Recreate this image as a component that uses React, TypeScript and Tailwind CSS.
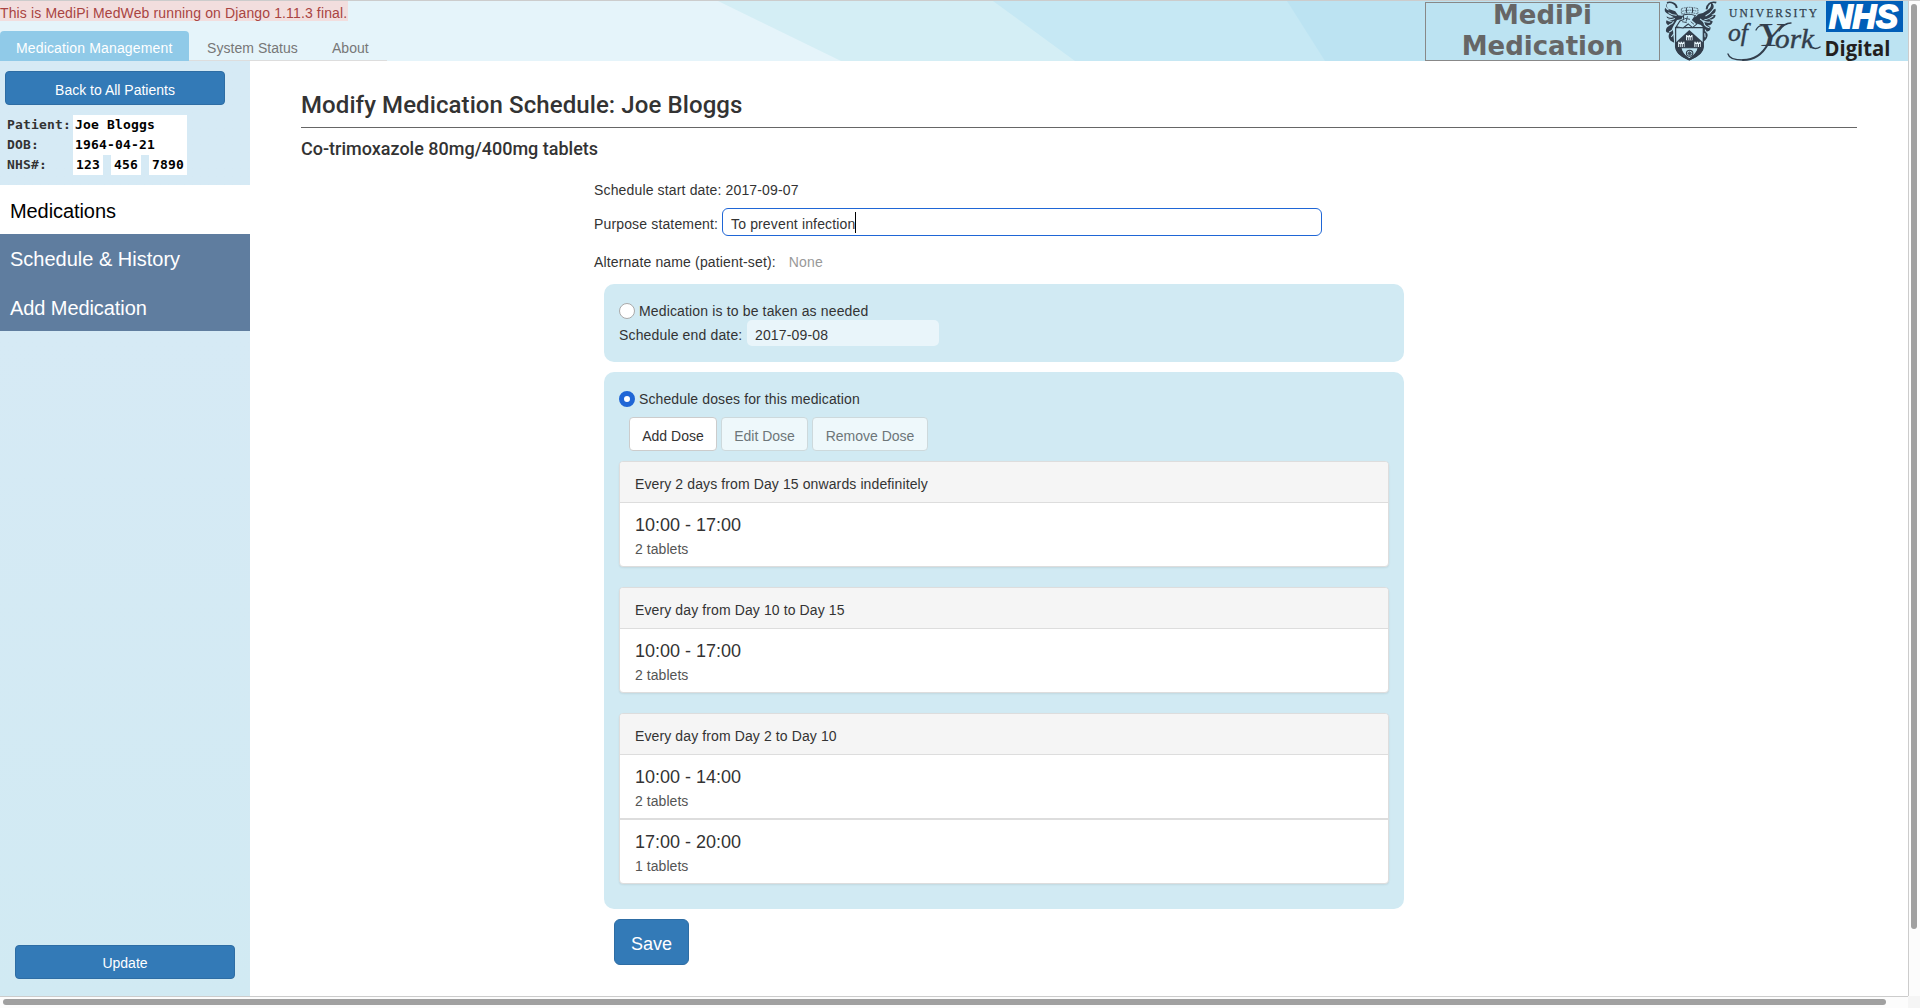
import React from 'react';

const schedules = [
  { title: 'Every 2 days from Day 15 onwards indefinitely', doses: [{ time: '10:00 - 17:00', amount: '2 tablets' }] },
  { title: 'Every day from Day 10 to Day 15', doses: [{ time: '10:00 - 17:00', amount: '2 tablets' }] },
  {
    title: 'Every day from Day 2 to Day 10',
    doses: [
      { time: '10:00 - 14:00', amount: '2 tablets' },
      { time: '17:00 - 20:00', amount: '1 tablets' },
    ],
  },
];

function BannerArt() {
  return (
    <svg className="absolute inset-0 h-[60px] w-[1908px]" viewBox="0 0 1908 60" aria-hidden="true">
      <path fill="#e5f4fa" d="M0 0H1908V60H0z" />
      <path fill="#d4eef5" d="M718 0H1908V60H841z" />
      <path fill="#c6e8f4" d="M993 0H1908V60H1075z" />
      <path fill="#bce3f2" d="M1287 0H1908V60H1325z" />
    </svg>
  );
}

function Castle({ x, y }: { x: number; y: number }) {
  return (
    <g transform={`translate(${x} ${y})`}>
      <path fill="#e6f5fb" d="M-9-8h4v3h3v-3h4v3h3v-3h4V8H-9z" />
      <path fill="#323e4c" d="M-6-1h3v9h-3zM-1-1h2v9h-2zM4-1h3v9H4z" />
    </g>
  );
}

function Crest() {
  return (
    <svg className="h-[60px] w-[54px]" viewBox="31 3 150 180" preserveAspectRatio="none" aria-hidden="true">
      <g fill="#323e4c">
        <path d="M47 5c-9 7-9 17 0 22l18 7 8 12 14 2-5 10-12 2-8 14c-4 6-6 12-3 20l3 34-10-6c-6-8-7-15-3-24-8 2-12-4-9-12 2-6 6-8 11-9-9-1-14-8-10-16 6 5 12 5 18 2-10-1-17-5-18-14 8 6 15 5 20 3L44 41c-8-4-10-11-7-18 3 5 7 8 12 8-8-8-10-18-2-26z" />
        <path d="M163 6c10 6 12 16 4 24l10-4c2 8-2 15-12 18l12 1c-1 10-8 14-18 14l10 5c-1 10-8 13-15 11l9 7c1 9-4 13-11 12 5 10 4 18-3 26l-9 8 3-38c1-8-3-13-8-16l-14-4-14-16 14-3 9-9 12-3 12-8c8-6 13-12 9-25z" />
      </g>
      <path fill="#bce3f2" stroke="#323e4c" strokeWidth="3.5" d="M66 83h77v58c0 18-21 30-39 39-17-9-38-21-38-39z" />
      <path fill="#323e4c" d="M104 90l38 37v17H67v-17z" />
      <path fill="#bce3f2" stroke="#323e4c" strokeWidth="3" d="M80 143h49c0 15-12 25-25 33-13-8-24-18-24-33z" />
      <path fill="#323e4c" d="M66 135l16 8c2 12 9 21 22 33v5c-20-8-38-20-38-39zM143 135l-15 8c-3 12-10 21-24 33v5c20-8 39-20 39-39z" />
      <Castle x={104} y={113} />
      <Castle x={82} y={133} />
      <Castle x={127} y={133} />
      <g fill="none" stroke="#323e4c">
        <path strokeWidth="2" strokeDasharray="5 2" d="M82 26q22-8 46 0v16q-23-7-46 0zM84 34q22-7 42 0" />
        <path strokeWidth="3" d="M96 24v14M113 24v14" />
        <path fill="#bce3f2" strokeWidth="3" d="M87 45q18-6 34 2l-8 13 12 12-12 11-12-11-14 12-19-4 10-17 11-5z" />
        <path strokeWidth="2.5" d="M91 55l15 3M84 65l13 3M99 49l-4 16M108 65l9 8" />
        <path strokeWidth="5" d="M42 8c12-4 27 3 27 16M179 8c-16-5-26 6-27 20" />
        <circle cx="105" cy="160" r="9" strokeWidth="3" />
        <circle cx="105" cy="160" r="3.5" strokeWidth="2.5" />
        <path strokeWidth="1.5" d="M96 160h18M105 151v18M99 154l12 12M111 154l-12 12" />
      </g>
      <g fill="none" stroke="#bce3f2" strokeWidth="3">
        <path d="M46 38q12 9 23 8M42 55q13 7 22 0M47 75q10-2 14-11M48 96q9-3 12-13M54 111l7-10" />
        <path d="M171 28q-9 14-22 20M171 47q-13 12-25 12M162 66q-12 2-20-4M160 83q-8 0-15-10M158 101q-8-3-10-12M148 112l-1-12M134 57q12 8 12 16" />
      </g>
    </svg>
  );
}

function YorkWordmark() {
  return (
    <svg className="h-[60px] w-[97px] overflow-visible" viewBox="0 0 97 60" aria-label="University of York">
      <g fill="#323e4c" stroke="#323e4c" fontFamily="Liberation Serif, serif">
        <text x="4" y="15.5" fontSize="11.5" textLength="88" lengthAdjust="spacing" strokeWidth=".25">UNIVERSITY</text>
        <g fontStyle="italic" strokeWidth=".4">
          <text x="3" y="40" fontSize="26" textLength="20" lengthAdjust="spacingAndGlyphs">of</text>
          <text x="32" y="45" fontSize="34" textLength="26" lengthAdjust="spacingAndGlyphs" strokeWidth=".1">Y</text>
          <text x="50" y="47" fontSize="27" textLength="39" lengthAdjust="spacingAndGlyphs">ork</text>
        </g>
      </g>
      <g fill="none" stroke="#323e4c" strokeLinecap="round">
        <path strokeWidth="1.4" d="M66 22c-5 0-9 3-12 8" />
        <path strokeWidth="1.3" d="M31 29c2-4 5-5 8-4" />
        <path strokeWidth="2" d="M43 43c-6 11-14 16-25 16" />
        <path strokeWidth="1.3" d="M18 59c-8 0-14-2-15-6" />
        <path strokeWidth="1.5" d="M86 46c3 2 6 2 9 0" />
      </g>
    </svg>
  );
}

function NhsDigital() {
  return (
    <svg className="h-[60px] w-[78px] overflow-visible" viewBox="0 0 78 60" aria-label="NHS Digital">
      <path fill="#005eb8" d="M0 0h77v31H0z" />
      <text x="3" y="27" fontFamily="Liberation Sans, sans-serif" fontSize="33" fontWeight="700" fontStyle="italic" fill="#fff" stroke="#fff" strokeWidth="1.8" textLength="69" lengthAdjust="spacingAndGlyphs">NHS</text>
      <text x="-1.5" y="55" fontFamily="Open Sans, sans-serif" fontSize="21.5" fontWeight="700" fill="#231f20" textLength="66" lengthAdjust="spacingAndGlyphs">Digital</text>
    </svg>
  );
}

function Header() {
  return (
    <header className="relative h-[60px] w-full">
      <BannerArt />
      <div className="relative flex h-full justify-between">
        <div className="flex flex-col">
          <div className="h-5 w-[348px] bg-[#f2dede] pt-[2px] leading-[20px] tracking-[0.13px] whitespace-nowrap text-[#a94442]">
            This is MediPi MedWeb running on Django 1.11.3 final.
          </div>
          <nav className="mt-[10px] flex h-[30px] w-[387px] gap-[2px] border-b border-[#ddd] leading-[20px] tracking-[0.15px] whitespace-nowrap text-[#777]">
            <a className="h-[30px] w-[189px] rounded-t bg-[#90cae8] pt-[7px] pl-4 text-white">Medication Management</a>
            <a className="px-4 pt-[7px] tracking-[0.05px]">System Status</a>
            <a className="px-4 pt-[7px] tracking-[0.05px]">About</a>
          </nav>
        </div>
        <div className="flex">
          <div className="mt-px h-[59px] w-[235px] border border-[#888] text-center font-['DejaVu_Sans'] text-[26px] leading-[31px] font-bold text-[#666]">
            <div className="-mt-[3px]">MediPi<br />Medication</div>
          </div>
          <div className="ml-[3px]"><Crest /></div>
          <div className="ml-[8px]"><YorkWordmark /></div>
          <div className="mr-[4px] ml-[4px]"><NhsDigital /></div>
        </div>
      </div>
    </header>
  );
}

function Sidebar() {
  return (
    <aside className="flex h-full w-[250px] shrink-0 flex-col bg-linear-to-b from-[#d6eaf5] from-30% to-[#d1eaf3]">
      <button className="mt-[10px] ml-[5px] h-[34px] w-[220px] rounded border border-[#2e6da4] bg-[#337ab7] pt-[3px] leading-[20px] text-white">Back to All Patients</button>
      <div className="mt-[10px] ml-[7px] grid grid-cols-[66px_114px] font-['DejaVu_Sans_Mono'] text-[13px] leading-[20px] font-bold tracking-[0.17px] text-[#333]">
        <span>Patient:</span>
        <span className="bg-white pl-[2px] text-black">Joe Bloggs</span>
        <span>DOB:</span>
        <span className="bg-white pl-[2px] text-black">1964-04-21</span>
        <span>NHS#:</span>
        <span className="flex gap-2 text-black">
          <span className="w-[30px] bg-white pl-[3px]">123</span>
          <span className="w-[30px] bg-white pl-[3px]">456</span>
          <span className="w-[38px] bg-white pl-[3px]">7890</span>
        </span>
      </div>
      <nav className="mt-[10px] flex h-[146px] flex-col text-[20px] leading-[29px]">
        <a className="h-[49px] bg-white pt-[12px] pl-[10px] tracking-[-0.08px] text-black">Medications</a>
        <a className="h-[48px] bg-[#5f7d9f] pt-[11px] pl-[10px] text-white">Schedule &amp; History</a>
        <a className="h-[49px] bg-[#5f7d9f] pt-[12px] pl-[10px] tracking-[-0.08px] text-white">Add Medication</a>
      </nav>
      <button className="mt-auto mb-[17px] ml-[15px] h-[34px] w-[220px] rounded border border-[#2e6da4] bg-[#337ab7] pt-[2px] leading-[20px] text-white">Update</button>
    </aside>
  );
}

function ScheduleCard({ title, doses }: (typeof schedules)[number]) {
  return (
    <section className="mb-5 rounded border border-[#ddd] bg-white shadow-[0_1px_2px_rgba(0,0,0,0.075)]">
      <h3 className="h-[41px] rounded-t-[3px] border-b border-[#ddd] bg-[#f5f5f5] pt-[12px] pl-[15px] leading-[20px] tracking-[0.11px]">{title}</h3>
      <ul className="divide-y-2 divide-[#ddd]">
        {doses.map((dose) => (
          <li key={dose.time} className="pl-[15px]">
            <div className="h-[63px] pt-[12px]">
              <div className="text-[18px] leading-[20px] tracking-normal">{dose.time}</div>
              <div className="mt-[4px] leading-[20px] tracking-[0.05px] text-[#555]">{dose.amount}</div>
            </div>
          </li>
        ))}
      </ul>
    </section>
  );
}

function MedicationForm() {
  return (
    <main className="flex-1 pt-[27px] pl-[51px]">
      <h1 className="h-[39px] w-[1556px] font-['Roboto'] text-[24px] leading-[34px] font-medium tracking-[0.09px]">Modify Medication Schedule: Joe Bloggs</h1>
      <hr className="w-[1556px] border-[#666]" />
      <h2 className="mt-[10px] font-['Roboto'] text-[18px] leading-[22px] font-medium">Co-trimoxazole 80mg/400mg tablets</h2>
      <div className="ml-[293px] w-[810px] pt-[20px] leading-[20px] tracking-[0.15px]">
        <p>Schedule start date: 2017-09-07</p>
        <div className="mt-[8px] flex h-7">
          <label className="w-[128px] pt-[6px]">Purpose statement:</label>
          <div className="flex h-7 w-[600px] items-center rounded-[6px] border border-[#1f66d6] bg-white pl-[8px]">
            <span className="pt-[3px]">To prevent infection</span>
            <span className="h-[21px] w-px bg-black" />
          </div>
        </div>
        <p className="mt-[16px] flex">Alternate name (patient-set): <span className="ml-[13px] text-[#999]">None</span></p>
        <section className="mt-[12px] ml-[10px] h-[78px] rounded-[10px] bg-[#d1eaf3] px-[15px] pt-[17px]">
          <label className="flex h-5 gap-1">
            <span className="mt-[2px] size-4 rounded-full border border-[#aaa] bg-white" />
            Medication is to be taken as needed
          </label>
          <div className="-mt-px flex h-[26px]">
            <label className="w-[128px] pt-[5px]">Schedule end date:</label>
            <span className="w-[192px] rounded-[5px] bg-[#e9f5fa] pt-[5px] pl-2">2017-09-08</span>
          </div>
        </section>
        <section className="mt-[10px] ml-[10px] h-[537px] rounded-[10px] bg-[#d1eaf3] px-[15px] pt-[17px]">
          <label className="flex h-5 gap-1 tracking-[0.11px]">
            <span className="mt-[2px] size-4 rounded-full border-5 border-[#1f66d6] bg-white" />
            Schedule doses for this medication
          </label>
          <div className="mt-[8px] mb-[10px] ml-[10px] flex h-[34px] gap-1 text-center tracking-normal">
            <button className="w-[88px] rounded border border-[#ccc] bg-white pt-[3px]">Add Dose</button>
            <button className="w-[87px] rounded border border-[#cdd9dc] bg-[#eef8fb] pt-[3px] text-[#6d7679]">Edit Dose</button>
            <button className="w-[116px] rounded border border-[#cdd9dc] bg-[#eef8fb] pt-[3px] text-[#6d7679]">Remove Dose</button>
          </div>
          {schedules.map((schedule) => <ScheduleCard key={schedule.title} {...schedule} />)}
        </section>
        <button className="mt-[10px] ml-[20px] h-[46px] w-[75px] rounded-[6px] border border-[#2e6da4] bg-[#337ab7] pt-[3px] text-[18px] tracking-normal text-white">Save</button>
      </div>
    </main>
  );
}

export default function App() {
  return (
    <div className="grid h-[1008px] w-[1920px] grid-cols-[1908px_12px] grid-rows-[996px_12px] overflow-hidden bg-[#fcfcfc] font-['Liberation_Sans',sans-serif] text-[14px] text-[#333]">
      <div className="flex flex-col border-t border-[#ccc] bg-white">
        <Header />
        <div className="flex h-[935px]">
          <Sidebar />
          <MedicationForm />
        </div>
      </div>
      <div className="border-t border-l border-[#ccc] pt-[3px] pl-[2px]">
        <div className="h-[925px] w-[6px] rounded-full bg-[#a0a0a0]" />
      </div>
      <div className="border-t border-[#ccc] pt-[2px] pl-[3px]">
        <div className="h-[6px] w-[1883px] rounded-full bg-[#a0a0a0]" />
      </div>
      <div className="bg-[#f5f5f5]" />
    </div>
  );
}
